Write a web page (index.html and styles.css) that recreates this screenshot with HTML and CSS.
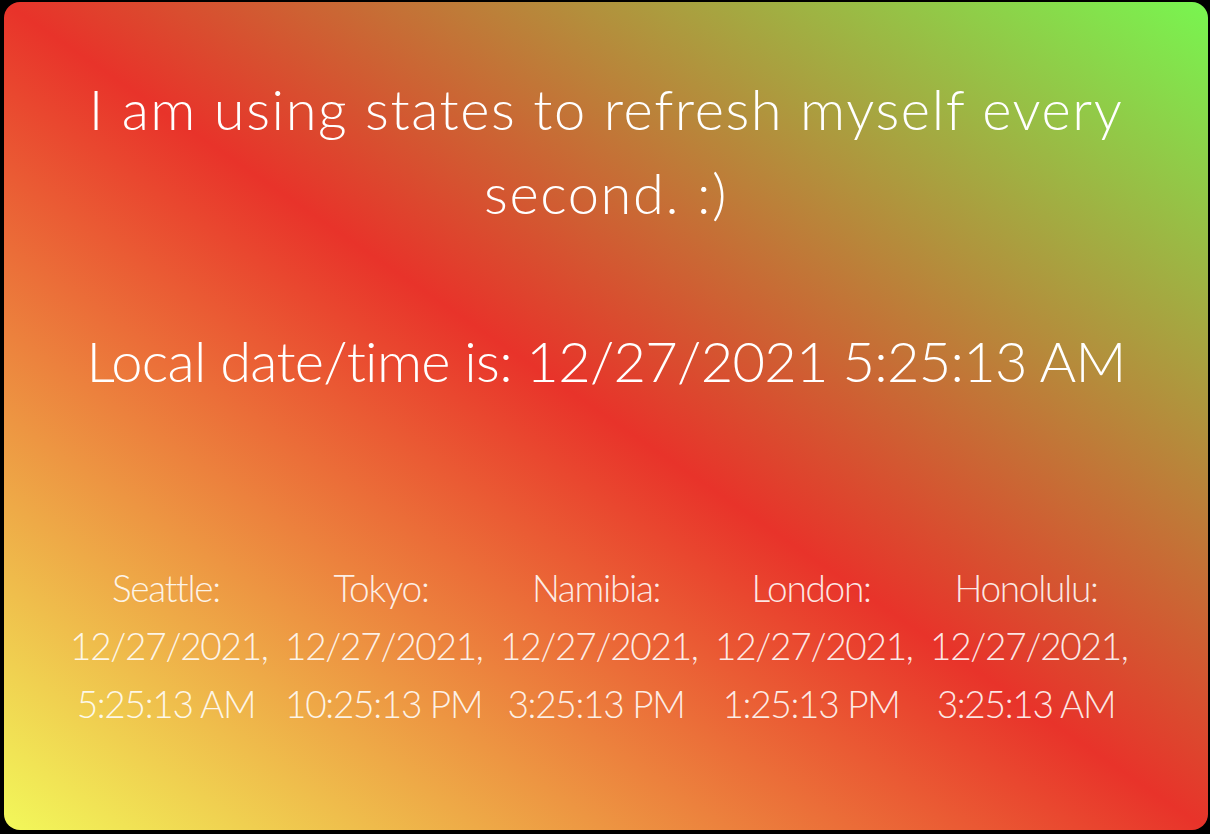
FILE: index.html
```html
<!DOCTYPE html>
<html>
<head>
<meta charset="utf-8">
<link rel="stylesheet" href="styles.css">
</head>
<body>
<div class="card">
  <h1 class="title">I am using states to refresh myself every second. :)</h1>
  <h2 class="local">Local date/time is: 12/27/2021 5:25:13 AM</h2>
  <div class="zones">
    <div class="zone">Seattle:<br>12/27/2021,<br>5:25:13 AM</div>
    <div class="zone">Tokyo:<br>12/27/2021,<br>10:25:13 PM</div>
    <div class="zone">Namibia:<br>12/27/2021,<br>3:25:13 PM</div>
    <div class="zone">London:<br>12/27/2021,<br>1:25:13 PM</div>
    <div class="zone">Honolulu:<br>12/27/2021,<br>3:25:13 AM</div>
  </div>
</div>
</body>
</html>
```

FILE: styles.css
```css
html, body {
  margin: 0;
  padding: 0;
  background: #000;
}
body {
  width: 1210px;
  height: 834px;
  overflow: hidden;
  font-family: "Lato", "Liberation Sans", sans-serif;
  font-weight: 300;
  font-variant-ligatures: none;
  color: #fff;
}
.card {
  box-sizing: border-box;
  margin: 2px 2px 0 4px;
  width: 1204px;
  height: 828px;
  border-radius: 16px;
  background: linear-gradient(to top right, #f2f85a 0%, #e8332a 50%, #78f650 100%);
  display: flex;
  flex-direction: column;
  align-items: center;
  padding: 65px 40px 0;
  text-align: center;
}
.title {
  margin: 0;
  font-size: 56px;
  line-height: 84px;
  font-weight: 300;
  letter-spacing: 1.6px;
  max-width: 1080px;
}
.local {
  margin: 84px 0 0;
  font-size: 56px;
  line-height: 84px;
  font-weight: 300;
  letter-spacing: -0.7px;
}
.zones {
  margin: 156px 20px 0 0;
  display: flex;
  justify-content: center;
  gap: 23px;
}
.zone {
  font-size: 37px;
  line-height: 58px;
  letter-spacing: -1.3px;
  white-space: nowrap;
  color: rgba(255,255,255,0.88);
  width: 192px;
}
```
